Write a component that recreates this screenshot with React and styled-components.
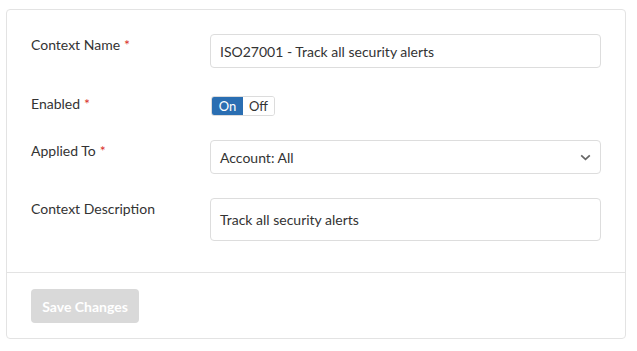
import React from "react";
import styled, { createGlobalStyle } from "styled-components";

const Global = createGlobalStyle`
  html, body { margin: 0; padding: 0; background: #fff; }
  body { font-family: Lato, "Open Sans", Arial, sans-serif; }
  * { box-sizing: border-box; }
`;

const Page = styled.div`
  padding: 9px 11px 0 6px;
`;

const Card = styled.div`
  width: 620px;
  height: 330px;
  border: 1px solid #e3e3e3;
  border-radius: 4px;
  background: #fff;
  display: flex;
  flex-direction: column;
`;

const Body = styled.div`
  flex: 0 0 263px;
  padding: 24px 24px 0 24px;
  border-bottom: 1px solid #e3e3e3;
`;

const Row = styled.div`
  display: grid;
  grid-template-columns: 179px 391px;
  align-items: start;
  margin-bottom: ${(p) => p.$mb}px;
`;

const Label = styled.div`
  font-size: 14px;
  color: #333;
  padding-top: ${(p) => p.$pt}px;
  line-height: 17px;
`;

const Req = styled.span`
  color: #d9302c;
  margin-left: 4px;
`;

const Field = styled.div`
  height: ${(p) => p.$h}px;
  border: 1px solid #dddddd;
  border-radius: 4px;
  display: flex;
  align-items: center;
  padding: 0 9px;
  font-size: 14px;
  color: #333;
  justify-content: space-between;
`;

const Toggle = styled.div`
  display: inline-flex;
  height: 20px;
  margin-top: 1px;
  margin-left: 1px;
  border: 1px solid #dcdcdc;
  border-radius: 3px;
  overflow: hidden;
  width: 64px;
`;

const ToggleOpt = styled.div`
  flex: ${(p) => (p.$on ? "0 0 31px" : "1")};
  display: flex;
  align-items: center;
  justify-content: center;
  font-size: 13px;
  background: ${(p) => (p.$on ? "#2a6eb2" : "#fff")};
  color: ${(p) => (p.$on ? "#fff" : "#333")};
`;

const Footer = styled.div`
  padding: 16px 24px 15px;
`;

const Button = styled.button`
  width: 108px;
  height: 34px;
  border: none;
  border-radius: 4px;
  background: #d9d9d9;
  color: #fff;
  font-family: Lato, "Open Sans", Arial, sans-serif;
  font-weight: 700;
  font-size: 14px;
  padding: 0;
`;

const Chevron = () => (
  <svg width="11" height="7" viewBox="0 0 11 7">
    <path d="M1.2 1.3 L5.5 5.3 L9.8 1.3" fill="none" stroke="#666" strokeWidth="1.7" />
  </svg>
);

export default function App() {
  return (
    <>
      <Global />
      <Page>
        <Card>
          <Body>
            <Row $mb={27}>
              <Label $pt={2}>
                Context Name<Req>*</Req>
              </Label>
              <Field $h={34}>ISO27001 - Track all security alerts</Field>
            </Row>
            <Row $mb={24}>
              <Label $pt={0}>
                Enabled<Req>*</Req>
              </Label>
              <Toggle>
                <ToggleOpt $on>On</ToggleOpt>
                <ToggleOpt>Off</ToggleOpt>
              </Toggle>
            </Row>
            <Row $mb={24}>
              <Label $pt={2}>
                Applied To<Req>*</Req>
              </Label>
              <Field $h={34}>
                Account: All
                <Chevron />
              </Field>
            </Row>
            <Row $mb={0}>
              <Label $pt={2}>Context Description</Label>
              <Field $h={43}>Track all security alerts</Field>
            </Row>
          </Body>
          <Footer>
            <Button>Save Changes</Button>
          </Footer>
        </Card>
      </Page>
    </>
  );
}
